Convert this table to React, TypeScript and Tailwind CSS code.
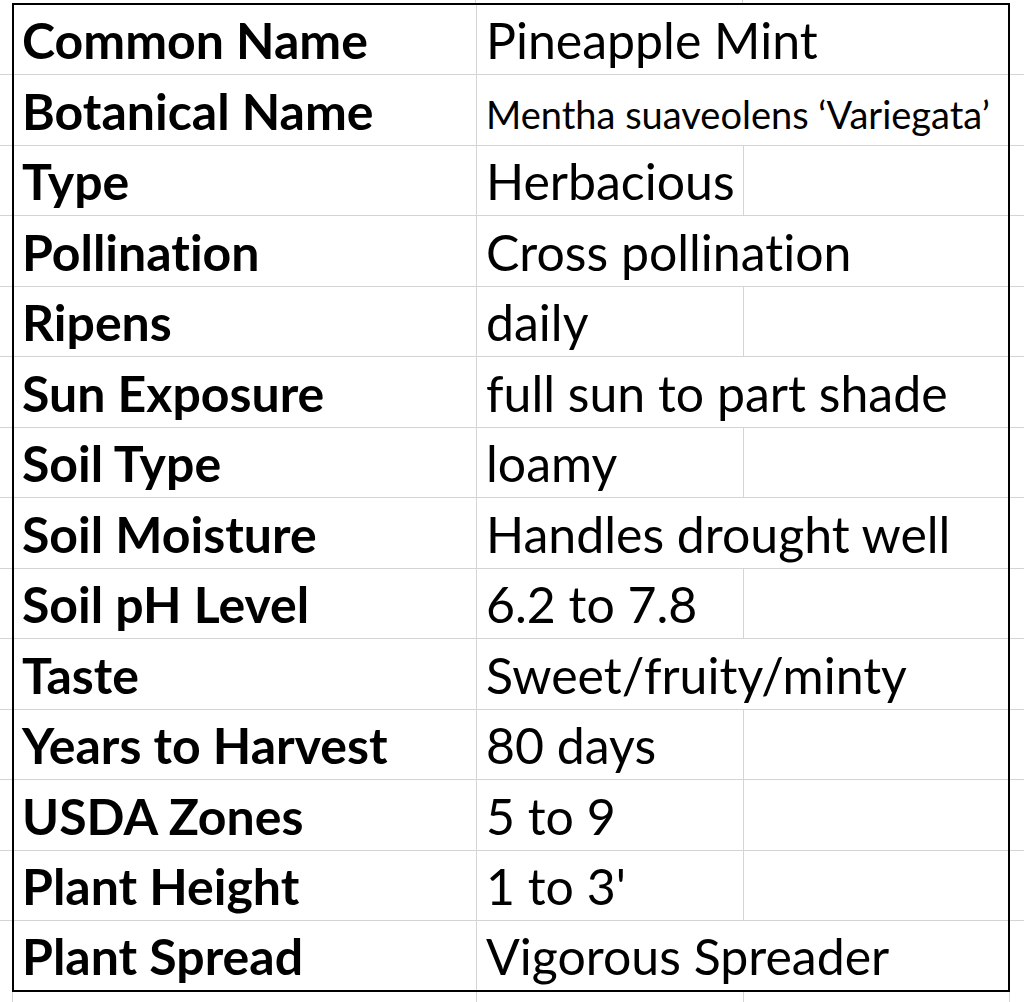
const rows: { label: string; value: string; wide?: boolean; small?: boolean }[] = [
  { label: 'Common Name', value: 'Pineapple Mint', wide: true },
  { label: 'Botanical Name', value: 'Mentha suaveolens ‘Variegata’', wide: true, small: true },
  { label: 'Type', value: 'Herbacious' },
  { label: 'Pollination', value: 'Cross pollination', wide: true },
  { label: 'Ripens', value: 'daily' },
  { label: 'Sun Exposure', value: 'full sun to part shade', wide: true },
  { label: 'Soil Type', value: 'loamy' },
  { label: 'Soil Moisture', value: 'Handles drought well', wide: true },
  { label: 'Soil pH Level', value: '6.2 to 7.8' },
  { label: 'Taste', value: 'Sweet/fruity/minty', wide: true },
  { label: 'Years to Harvest', value: '80 days' },
  { label: 'USDA Zones', value: '5 to 9' },
  { label: 'Plant Height', value: "1 to 3'" },
  { label: 'Plant Spread', value: 'Vigorous Spreader', wide: true },
];

function rowHeight(i: number) {
  if (i === rows.length - 1) return 'h-[69px]';
  return i % 2 === 0 ? 'h-[70px]' : 'h-[71px]';
}

export default function App() {
  return (
    <div className="w-[1024px] h-[1002px] bg-white overflow-hidden font-[Lato,sans-serif] text-black [font-variant-ligatures:none]">
      {/* strip above the table */}
      <div className="flex h-[3px]">
        <div className="w-[476px] border-r border-[#d4d4d4]" />
        <div className="w-[267px] border-r border-[#d4d4d4]" />
      </div>

      <div className="flex">
        {/* left margin gridlines */}
        <div className="w-[12px] mt-[2px] flex flex-col">
          {rows.slice(0, -1).map((r, i) => (
            <div key={r.label} className={`${rowHeight(i)} border-b border-[#d4d4d4]`} />
          ))}
        </div>

        {/* the sheet */}
        <div className="w-[998px] border-2 border-black flex flex-col">
          {rows.map((r, i) => (
            <div
              key={r.label}
              className={`${rowHeight(i)} flex ${i < rows.length - 1 ? 'border-b border-[#d4d4d4]' : ''}`}
            >
              <div className="w-[463px] shrink-0 border-r border-[#d4d4d4] flex items-end pl-[8px] pb-[9px]">
                <span className="text-[50px] font-bold leading-none whitespace-nowrap">{r.label}</span>
              </div>
              <div
                className={`w-[267px] shrink-0 flex items-end pl-[9px] pb-[9px] ${r.wide ? '' : 'border-r border-[#d4d4d4]'}`}
              >
                <span className={`${r.small ? 'text-[38px] pb-[3px]' : 'text-[50px]'} leading-none whitespace-nowrap`}>
                  {r.value}
                </span>
              </div>
              <div className="flex-1" />
            </div>
          ))}
        </div>

        {/* right margin gridlines */}
        <div className="flex-1 mt-[2px] flex flex-col">
          {rows.slice(0, -1).map((r, i) => (
            <div key={r.label} className={`${rowHeight(i)} border-b border-[#d4d4d4]`} />
          ))}
        </div>
      </div>

      {/* strip below the table */}
      <div className="flex h-[10px] ml-[12px]">
        <div className="w-[465px] border-x border-[#d4d4d4]" />
        <div className="w-[267px] border-r border-[#d4d4d4]" />
        <div className="w-[266px] border-r border-[#d4d4d4]" />
      </div>
    </div>
  );
}
